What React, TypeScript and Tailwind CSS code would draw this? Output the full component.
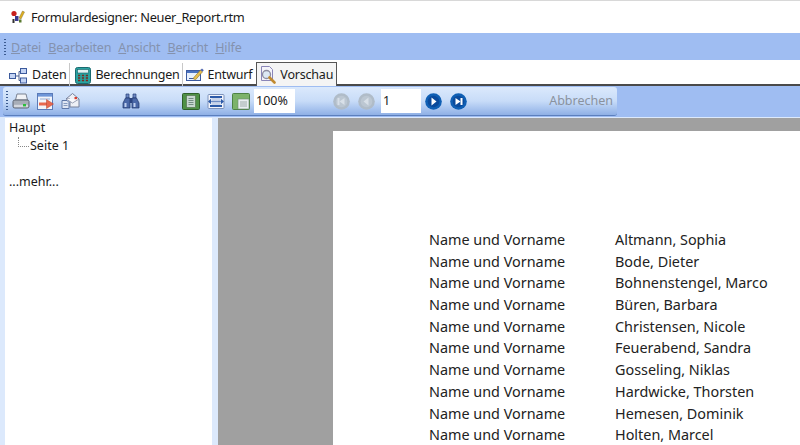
import type { ReactNode } from "react";

const names = [
  "Altmann, Sophia",
  "Bode, Dieter",
  "Bohnenstengel, Marco",
  "Büren, Barbara",
  "Christensen, Nicole",
  "Feuerabend, Sandra",
  "Gosseling, Niklas",
  "Hardwicke, Thorsten",
  "Hemesen, Dominik",
  "Holten, Marcel",
];

// ─── small drawn icons ──────────────────────────────────────────────
function AppIcon() {
  return (
    <svg width="16" height="15" viewBox="0 0 16 15">
      <circle cx="4" cy="3.500" r="2.600" fill="#c8201c" />
      <path d="M9 8l3.500-7 2 1L11 9z" fill="#e0b020" stroke="#6a5a20" strokeWidth="0.400" />
      <rect x="5" y="6" width="3.500" height="5" fill="#3a3a90" />
      <rect x="2.500" y="9" width="2" height="4" fill="#333" />
      <rect x="9" y="9.500" width="2.500" height="3" fill="#5a7a30" />
    </svg>
  );
}

function DatenIcon() {
  return (
    <svg width="18" height="17" viewBox="0 0 18 17">
      <path d="M6 9h4M10 4.500v9M10 4.500h2M10 13.500h2" stroke="#4a5f90" fill="none" />
      <rect x="0.500" y="6.500" width="6" height="5" fill="#c4d4f4" stroke="#3c5a9c" />
      <rect x="11.500" y="1.500" width="6" height="5" fill="#c4d4f4" stroke="#3c5a9c" />
      <rect x="11.500" y="11" width="6" height="5" fill="#c4d4f4" stroke="#3c5a9c" />
    </svg>
  );
}

function CalcIcon() {
  return (
    <svg width="16" height="17" viewBox="0 0 16 17">
      <rect x="0.500" y="0.500" width="15" height="16" rx="2" fill="#29a3a0" stroke="#1a6a70" />
      <rect x="2.500" y="2.500" width="11" height="3.500" fill="#dff2f2" stroke="#14606a" strokeWidth="0.600" />
      <path d="M3 8.500h2.200M6.900 8.500h2.200M10.800 8.500h2.200M3 11h2.200M6.900 11h2.200M10.800 11h2.200M3 13.500h2.200M6.900 13.500h2.200M10.800 13.500h2.200" stroke="#7a2a20" strokeWidth="1.500" />
    </svg>
  );
}

function EntwurfIcon() {
  return (
    <svg width="18" height="15" viewBox="0 0 18 15">
      <rect x="0.500" y="2.500" width="14" height="10" fill="#e8f0fc" stroke="#3c5aa0" />
      <rect x="1" y="3" width="13" height="2" fill="#4a72c0" />
      <path d="M3 10.500h6" stroke="#3c5aa0" />
      <path d="M7 10.500l7.500-8.500 2 1.800-7 8z" fill="#e8c050" stroke="#8a6a20" strokeWidth="0.600" />
      <path d="M14.500 2l1.500-1.500 1.800 1.700-1.500 1.600z" fill="#4a62b0" />
    </svg>
  );
}

function VorschauIcon() {
  return (
    <svg width="17" height="18" viewBox="0 0 17 18">
      <path d="M1.500 0.500h8l3 3v11h-11z" fill="#f4f4fa" stroke="#8a86b8" />
      <circle cx="6.500" cy="8.500" r="4" fill="#dce8f4" stroke="#8c8ca0" strokeWidth="1.300" />
      <path d="M9.500 11.500l5 5" stroke="#c08a30" strokeWidth="2.600" strokeLinecap="round" />
    </svg>
  );
}

function PrintIcon() {
  return (
    <svg width="18" height="17" viewBox="0 0 18 17">
      <path d="M5 1h9l1.500 6h-12z" fill="#f0f2f6" stroke="#7a8292" />
      <path d="M1 8.500q0-1.500 2-1.500h12q2 0 2 1.500v5q0 1.500-2 1.500H3q-2 0-2-1.500z" fill="#a8aeb8" stroke="#5e6674" />
      <rect x="2" y="11.800" width="14" height="2.400" fill="#d4d8de" />
      <rect x="11" y="11" width="3" height="2.400" fill="#2bbf3c" />
    </svg>
  );
}

function ExportIcon() {
  return (
    <svg width="17" height="17" viewBox="0 0 17 17">
      <rect x="0.500" y="0.500" width="15" height="16" fill="#f2f4fa" stroke="#5a7ab8" />
      <rect x="1" y="1" width="14" height="2.600" fill="#6e96d8" />
      <path d="M3 6h10" stroke="#9ab0d4" />
      <rect x="2" y="9.500" width="8" height="3" fill="#e86850" />
      <path d="M9.500 6.500l7 4.500-7 4.500z" fill="#e86850" stroke="#b04030" strokeWidth="0.500" />
    </svg>
  );
}

function MailIcon() {
  return (
    <svg width="19" height="16" viewBox="0 0 19 16">
      <path d="M5 6l6.500-5.500L18 6v8H9V6z" fill="#eef0f6" stroke="#77809a" />
      <path d="M5 6l6.500 4L18 6" fill="#f8f8fc" stroke="#77809a" strokeWidth="0.700" />
      <rect x="13.500" y="4" width="2.500" height="2.200" fill="#d84030" />
      <path d="M1 7.500h5l2 2v6H1z" fill="#dfe6f4" stroke="#5f78a8" />
      <path d="M2.500 10.500h4M2.500 12.500h4" stroke="#5f78a8" strokeWidth="0.700" />
    </svg>
  );
}

function BinocularIcon() {
  return (
    <svg width="18" height="16" viewBox="0 0 18 16">
      <path d="M4 1h3v4H4zM11 1h3v4h-3z" fill="#6c86c0" stroke="#27407a" strokeWidth="0.700" />
      <path d="M3.500 5h4.500v10H1V10z" fill="#4a68a8" stroke="#1e3468" strokeWidth="0.700" />
      <path d="M10 5h4.500L17 10v5h-7z" fill="#4a68a8" stroke="#1e3468" strokeWidth="0.700" />
      <rect x="8" y="5" width="2" height="5" fill="#2b4480" />
      <rect x="2.500" y="10" width="2" height="4" fill="#c0d0ee" />
      <rect x="11.500" y="10" width="2" height="4" fill="#c0d0ee" />
    </svg>
  );
}

function PageWideIcon() {
  return (
    <svg width="18" height="17" viewBox="0 0 18 17">
      <rect x="0.500" y="0.500" width="17" height="16" rx="1" fill="#4f9146" stroke="#2f5f2a" />
      <rect x="4.500" y="2.500" width="9" height="12" fill="#c8d8d0" stroke="#4d6a48" strokeWidth="0.600" />
      <path d="M6.500 5.500h5M6.500 7.500h5M6.500 9.500h5M6.500 11.500h5" stroke="#607a70" strokeWidth="0.800" />
    </svg>
  );
}

function FitWidthIcon() {
  return (
    <svg width="18" height="15" viewBox="0 0 18 15">
      <rect x="1" y="0.500" width="16" height="14" rx="1" fill="#f2f4fa" stroke="#7c92bc" />
      <rect x="3" y="2" width="12" height="2" fill="#2c5aa8" />
      <rect x="3" y="11" width="12" height="2" fill="#2c5aa8" />
      <rect x="4.500" y="4" width="9" height="7" fill="#c8d4ea" />
      <path d="M1 7.500l3-2.800v5.600zM17 7.500l-3-2.800v5.600z" fill="#2c5aa8" />
      <path d="M4 7.500h10" stroke="#6e8cc4" strokeWidth="1.200" />
    </svg>
  );
}

function TwoPageIcon() {
  return (
    <svg width="18" height="17" viewBox="0 0 18 17">
      <rect x="0.500" y="0.500" width="17" height="16" rx="1" fill="#7cb36a" stroke="#4d8245" />
      <rect x="6" y="6" width="11" height="10" fill="#e9eef0" stroke="#6a8a70" strokeWidth="0.600" />
      <path d="M8 9h7M8 11h7M8 13h7" stroke="#8a9a98" strokeWidth="0.800" />
    </svg>
  );
}

function NavButton({ kind, active }: { kind: "first" | "prev" | "next" | "last"; active: boolean }) {
  const left = kind === "first" || kind === "prev";
  const bar = kind === "first" || kind === "last";
  const tri = left
    ? bar
      ? "M11.500 5L6.500 8.500l5 3.500z"
      : "M10.500 4.500L5.500 8.500l5 4z"
    : bar
      ? "M5.500 5l5 3.500-5 3.500z"
      : "M6.500 4.500l5 4-5 4z";
  const barX = left ? 4.5 : 10.5;
  return (
    <svg width="17" height="17" viewBox="0 0 17 17">
      <circle cx="8.500" cy="8.500" r="8.300" fill={active ? "#0f5fb4" : "#b0bcc8"} />
      <circle cx="8.500" cy="8.500" r="5.800" fill={active ? "#0a4a9c" : "#bcc7d2"} />
      <path d={tri} fill={active ? "#fff" : "#d8e0e8"} />
      {bar && <rect x={barX} y="5" width="2" height="7" fill={active ? "#fff" : "#d8e0e8"} />}
    </svg>
  );
}

function Grip({ h }: { h: string }) {
  return (
    <div
      className={`${h} w-[2px] shrink-0 bg-[repeating-linear-gradient(to_bottom,#3b5a90_0,#3b5a90_1px,transparent_1px,transparent_3px)]`}
    />
  );
}

function Tab({ icon, label, gap, pr }: { icon: ReactNode; label: string; gap: string; pr: string }) {
  return (
    <div className={`flex h-[23px] items-center pt-[1px] ${gap} ${pr}`}>
      {icon}
      <span>{label}</span>
    </div>
  );
}

export default function App() {
  return (
    <div className="flex h-[445px] w-[800px] flex-col overflow-hidden bg-white text-[12.500px] text-[#1a1a1a] [font-family:'Noto_Sans',sans-serif]">
      {/* title bar */}
      <div className="flex h-[33px] shrink-0 items-center gap-[5px] border-t border-[#d8d8d8] pl-[10px] pt-[1px] text-[12.800px] tracking-[-0.3px]">
        <AppIcon />
        <span>Formulardesigner: Neuer_Report.rtm</span>
      </div>

      {/* menu bar */}
      <div className="flex h-[27px] shrink-0 items-center bg-[#9fbdf2] pl-[4px] pt-[3px] text-[#8492ae]">
        <Grip h="h-[18px]" />
        <div className="ml-[5px] flex gap-[7px] tracking-[-0.15px]">
          <span><u>D</u>atei</span>
          <span><u>B</u>earbeiten</span>
          <span><u>A</u>nsicht</span>
          <span><u>B</u>ericht</span>
          <span><u>H</u>ilfe</span>
        </div>
      </div>

      {/* tabs */}
      <div className="flex h-[26px] shrink-0 items-end border-b-2 border-[#4a4a4a] bg-white pl-[9px] tracking-[-0.2px]">
        <div className="-mb-[2px] flex items-end gap-[5px]">
          <Tab icon={<DatenIcon />} label="Daten" gap="gap-[5px]" pr="border-r border-[#c8c8c8] pr-[3px]" />
          <Tab icon={<CalcIcon />} label="Berechnungen" gap="gap-[4px]" pr="border-r border-[#c8c8c8] pr-[2px]" />
          <div className="-ml-[2px] -mr-[5px]">
            <Tab icon={<EntwurfIcon />} label="Entwurf" gap="gap-[4px]" pr="pr-[4px]" />
          </div>
          <div className="flex h-[24px] items-center gap-[3px] border border-b-0 border-[#555] bg-[#f4f4f4] pl-[3px] pr-[3px] pt-[1px]">
            <VorschauIcon />
            <span>Vorschau</span>
          </div>
        </div>
      </div>

      {/* toolbar */}
      <div className="flex h-[31px] shrink-0 items-start bg-[#9fbdf2] pt-[1px]">
        <div className="ml-[3px] flex h-[29px] w-[614px] items-center rounded-[3px] border-b border-[#5b7fbe] bg-gradient-to-b from-[#dbe9fc] via-[#c8dcf8] to-[#8fb0e6] pl-[3px]">
          <Grip h="h-[20px]" />
          <div className="ml-[4px] flex items-center gap-[7px]">
            <PrintIcon />
            <ExportIcon />
            <MailIcon />
          </div>
          <div className="ml-[42px]">
            <BinocularIcon />
          </div>
          <div className="ml-[42px] flex items-center gap-[7px]">
            <PageWideIcon />
            <FitWidthIcon />
            <TwoPageIcon />
          </div>
          <div className="ml-[4px] flex h-[24px] w-[41px] items-center bg-white pl-[2px]">100%</div>
          <div className="ml-[38px] flex items-center gap-[8px]">
            <NavButton kind="first" active={false} />
            <NavButton kind="prev" active={false} />
          </div>
          <div className="ml-[6px] flex h-[24px] w-[40px] items-center bg-white pl-[2px]">1</div>
          <div className="ml-[4px] flex items-center gap-[8px]">
            <NavButton kind="next" active />
            <NavButton kind="last" active />
          </div>
          <span className="ml-auto pr-[4px] text-[#8a929e]">Abbrechen</span>
        </div>
      </div>

      {/* content */}
      <div className="flex min-h-0 flex-1 bg-[#dce9fc]">
        <div className="ml-[5px] mt-[1px] w-[207px] shrink-0 bg-white pl-[4px] pt-[1px]">
          <div className="leading-[18px]">Haupt</div>
          <div className="flex h-[18px] items-center">
            <div className="mb-[8px] ml-[9px] h-[10px] w-[11px] shrink-0 border-b border-l border-dotted border-[#888]" />
            <span className="ml-px">Seite 1</span>
          </div>
          <div className="mt-[18px] leading-[18px]">...mehr...</div>
        </div>
        <div className="ml-[6px] mt-[1px] flex-1 bg-[#a0a0a0] pl-[115px] pt-[13px]">
          <div className="h-full bg-white pl-[96px] pt-[98px] text-[14.400px] text-[#222]">
            {names.map((n) => (
              <div key={n} className="flex h-[21.700px] items-center">
                <span className="w-[186px]">Name und Vorname</span>
                <span>{n}</span>
              </div>
            ))}
          </div>
        </div>
      </div>
    </div>
  );
}
